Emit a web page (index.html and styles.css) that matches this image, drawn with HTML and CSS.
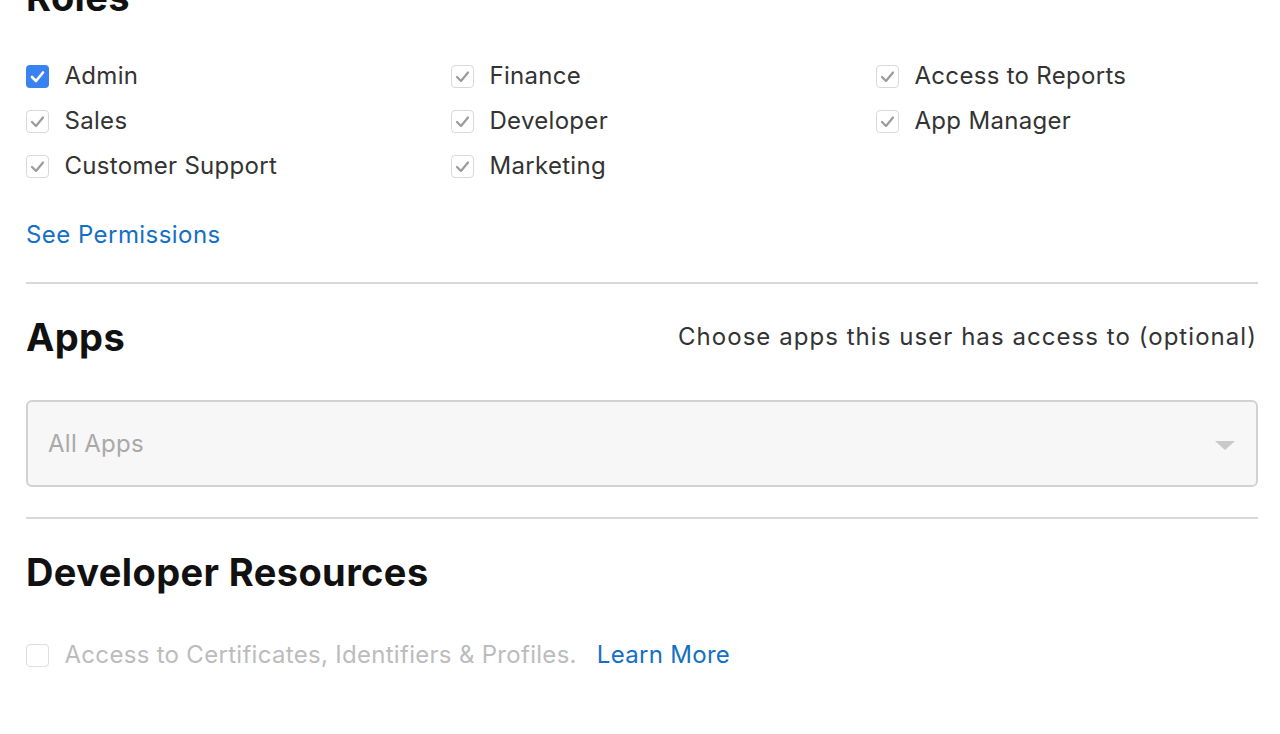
FILE: index.html
```html
<!DOCTYPE html>
<html lang="en">
<head>
<meta charset="utf-8">
<title>User Roles</title>
<link rel="stylesheet" href="styles.css">
</head>
<body>
<main class="page">
  <section class="section roles">
    <h2 class="heading roles-heading">Roles</h2>
    <div class="role-grid">
      <label class="check-row"><span class="box box-on"><svg viewBox="0 0 23 23"><path d="M6 12 L10 16 L17 7.5" /></svg></span><span class="label">Admin</span></label>
      <label class="check-row"><span class="box box-dim"><svg viewBox="0 0 23 23"><path d="M6 12 L10 16 L17 7.5" /></svg></span><span class="label">Finance</span></label>
      <label class="check-row"><span class="box box-dim"><svg viewBox="0 0 23 23"><path d="M6 12 L10 16 L17 7.5" /></svg></span><span class="label">Access to Reports</span></label>
      <label class="check-row"><span class="box box-dim"><svg viewBox="0 0 23 23"><path d="M6 12 L10 16 L17 7.5" /></svg></span><span class="label">Sales</span></label>
      <label class="check-row"><span class="box box-dim"><svg viewBox="0 0 23 23"><path d="M6 12 L10 16 L17 7.5" /></svg></span><span class="label">Developer</span></label>
      <label class="check-row"><span class="box box-dim"><svg viewBox="0 0 23 23"><path d="M6 12 L10 16 L17 7.5" /></svg></span><span class="label">App Manager</span></label>
      <label class="check-row"><span class="box box-dim"><svg viewBox="0 0 23 23"><path d="M6 12 L10 16 L17 7.5" /></svg></span><span class="label">Customer Support</span></label>
      <label class="check-row"><span class="box box-dim"><svg viewBox="0 0 23 23"><path d="M6 12 L10 16 L17 7.5" /></svg></span><span class="label">Marketing</span></label>
    </div>
    <a class="link see-perm" href="#">See Permissions</a>
  </section>
  <hr class="divider">
  <section class="section apps">
    <div class="head-row">
      <h2 class="heading">Apps</h2>
      <span class="hint">Choose apps this user has access to (optional)</span>
    </div>
    <div class="select">
      <span class="placeholder">All Apps</span>
      <span class="arrow"></span>
    </div>
  </section>
  <hr class="divider">
  <section class="section devres">
    <h2 class="heading">Developer Resources</h2>
    <div class="check-row dev-row">
      <span class="box box-empty"></span>
      <span class="label muted">Access to Certificates, Identifiers &amp; Profiles.</span>
      <a class="link learn" href="#">Learn More</a>
    </div>
  </section>
</main>
</body>
</html>
```
FILE: styles.css
```css
html, body {
  margin: 0;
  padding: 0;
  background: #ffffff;
}
body {
  font-family: Inter, "Noto Sans", "Liberation Sans", sans-serif;
  color: #333333;
  overflow: hidden;
  height: 734px;
}
.page {
  width: 1232px;
  padding-left: 26px;
}
.heading {
  margin: 0;
  font-size: 38px;
  line-height: 44px;
  font-weight: 700;
  color: #111111;
  letter-spacing: 0.4px;
}
.roles-heading {
  margin-top: -25px;
}
.role-grid {
  display: grid;
  grid-template-columns: 425px 425px 1fr;
  grid-auto-rows: 45px;
  margin-top: 34px;
}
.check-row {
  display: flex;
  align-items: center;
  font-size: 24px;
  line-height: 30px;
}
.box {
  width: 23px;
  height: 23px;
  box-sizing: border-box;
  border-radius: 4px;
  flex: none;
  margin-right: 15.5px;
  display: flex;
  align-items: center;
  justify-content: center;
  position: relative;
  top: 1px;
}
.box svg {
  width: 23px;
  height: 23px;
  fill: none;
  stroke-width: 2.2;
  stroke-linecap: round;
  stroke-linejoin: round;
}
.box-on {
  background: #3a82f1;
}
.box-on svg {
  stroke: #ffffff;
  stroke-width: 2.6;
}
.box-dim {
  border: 1.5px solid #d9d9d9;
  background: #ffffff;
}
.box-dim svg {
  stroke: #9b9b9b;
  margin: -1.5px;
}
.box-empty {
  border: 1.5px solid #dedede;
  background: #ffffff;
}
.label {
  color: #333333;
  letter-spacing: 0.3px;
}
.link {
  color: #1470c4;
  text-decoration: none;
  font-size: 24px;
  line-height: 30px;
  letter-spacing: 0.45px;
}
.see-perm {
  display: inline-block;
  margin-top: 32px;
}
.divider {
  border: 0;
  height: 2px;
  background: #d8d8d8;
  margin: 0;
}
.roles {
  padding-bottom: 32px;
}
.apps {
  padding-top: 31px;
  padding-bottom: 30px;
}
.head-row {
  display: flex;
  justify-content: space-between;
  align-items: center;
}
.hint {
  font-size: 24px;
  line-height: 30px;
  color: #333333;
  letter-spacing: 1.05px;
  margin-right: 1px;
}
.select {
  margin-top: 41px;
  height: 87px;
  box-sizing: border-box;
  border: 2px solid #d2d2d2;
  border-radius: 6px;
  background: #f7f7f7;
  display: flex;
  align-items: center;
  justify-content: space-between;
  padding: 0 21px 0 20px;
}
.placeholder {
  font-size: 24px;
  color: #a9a9a9;
  letter-spacing: 0.3px;
}
.arrow {
  width: 0;
  height: 0;
  border-left: 10px solid transparent;
  border-right: 10px solid transparent;
  border-top: 9px solid #c9c9c9;
  margin-top: 3px;
}
.devres {
  padding-top: 31px;
}
.dev-row {
  margin-top: 38px;
  height: 45px;
}
.muted {
  color: #bcbcbc;
  letter-spacing: 0.3px;
}
.learn {
  margin-left: 20px;
  letter-spacing: 0.3px;
}
```
